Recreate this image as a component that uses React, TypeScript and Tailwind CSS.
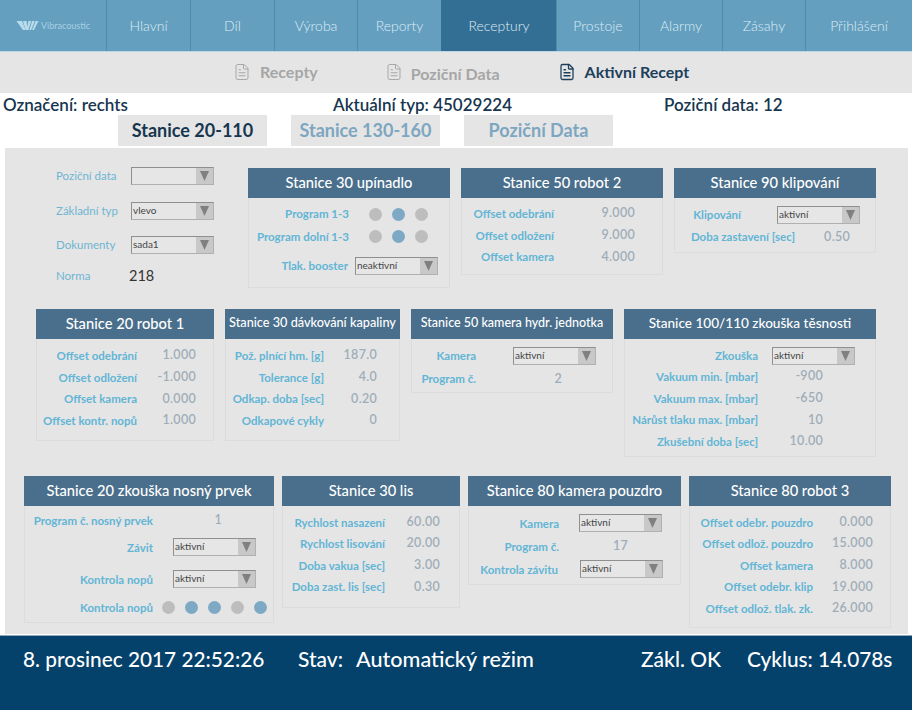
import { FileText } from "lucide-react";
import React from "react";

const navItems = [
  { label: "Hlavní", width: "w-[84px]" },
  { label: "Díl", width: "w-[84px]" },
  { label: "Výroba", width: "w-[83px]" },
  { label: "Reporty", width: "w-[84px]" },
  { label: "Receptury", width: "w-[115px]", active: true },
  { label: "Prostoje", width: "w-[83px]" },
  { label: "Alarmy", width: "w-[83px]" },
  { label: "Zásahy", width: "w-[83px]" },
  { label: "Přihlášení", width: "w-[107px]" },
];

const Logo = () => (
  <div className="w-[106px] flex items-center pl-[16px] gap-[2px] text-[#b9dcec]">
    <svg width="23" height="11" viewBox="0 0 24 12" fill="currentColor">
      <polygon points="0,1 6,1 10,11 7,11" />
      <polygon points="7,1 11,1 12,11 10,11" />
      <polygon points="13,1 16,1 13,11 11,11" />
      <polygon points="17,1 20,1 16,11 14,11" />
      <polygon points="21,1 24,1 19,11 17,11" />
    </svg>
    <span className="text-[9px] opacity-80">Vibracoustic</span>
  </div>
);

const Select = ({ value, width = "w-[83px]", className = "" }: { value?: string; width?: string; className?: string }) => (
  <div className={`${width} h-[18px] flex border border-[#8f8f8f] border-b-[#b0b0b0] border-r-[#b0b0b0] bg-[#e6e6e6] ${className}`}>
    <span className="flex-1 text-[10px] leading-[15px] text-[#444] pl-[1px]">{value}</span>
    <span className="w-[17px] bg-[#c8c8c8] flex items-center justify-center">
      <svg width="9" height="10" viewBox="0 0 9 10" fill="#808080">
        <polygon points="0,0 9,0 4.5,10" />
      </svg>
    </span>
  </div>
);

const Dots = ({ states, gap }: { states: boolean[]; gap: string }) => (
  <div className={`flex ${gap}`}>
    {states.map((on, i) => (
      <span key={i} className={`w-[13px] h-[13px] rounded-full ${on ? "bg-[#7da9c4]" : "bg-[#bdbdbd]"}`} />
    ))}
  </div>
);

const Label = ({ children, width }: { children: React.ReactNode; width: string }) => (
  <span className={`${width} shrink-0 text-right text-[11.5px] font-bold text-[#62b5d5] whitespace-nowrap`}>{children}</span>
);

const Value = ({ children, width }: { children: React.ReactNode; width: string }) => (
  <span className={`${width} shrink-0 text-right text-[12.5px] font-semibold tracking-[0.3px] text-[#9fadb8]`}>{children}</span>
);

const ValueRows = ({
  rows,
  labelWidth,
  valueWidth,
}: {
  rows: [string, string][];
  labelWidth: string;
  valueWidth: string;
}) => (
  <>
    {rows.map(([label, value]) => (
      <div key={label} className="h-[21.6px] flex items-center">
        <Label width={labelWidth}>{label}</Label>
        <Value width={valueWidth}>{value}</Value>
      </div>
    ))}
  </>
);

const Panel = ({
  title,
  width,
  body,
  titleSize = "text-[14.7px]",
  children,
}: {
  title: string;
  width: string;
  body: string;
  titleSize?: string;
  children: React.ReactNode;
}) => (
  <div className={`${width} shrink-0 border border-[#dcdcdc] border-t-0`}>
    <div className={`h-[30px] pb-[2px] -mx-px bg-[#4a6f8c] text-white font-medium ${titleSize} flex items-center justify-center whitespace-nowrap`}>
      {title}
    </div>
    <div className={body}>{children}</div>
  </div>
);

const FormRow = ({ label, children, className = "" }: { label: string; children: React.ReactNode; className?: string }) => (
  <div className={`flex items-center ${className}`}>
    <span className="w-[75px] text-[11.5px] text-[#6fb5d3]">{label}</span>
    {children}
  </div>
);

export default function App() {
  return (
    <div className="w-[912px] h-[710px] overflow-hidden bg-white flex flex-col font-['Lato','Noto_Sans',sans-serif]">
      {/* Top navigation */}
      <nav className="h-[52px] flex bg-[#659fbf] border-b border-[#bcd8e6]">
        <Logo />
        {navItems.map((item) => (
          <div
            key={item.label}
            className={`${item.width} flex items-center justify-center text-[14px] font-light border-l ${
              item.active
                ? "bg-[#336f95] border-[#336f95] text-[#dfecf4]"
                : "border-[#4f8bac] text-[#dcecf4]"
            }`}
          >
            {item.label}
          </div>
        ))}
      </nav>

      {/* Sub navigation */}
      <div className="h-[41px] pb-[1px] bg-[#e5e5e5] flex items-center pl-[233px] text-[16px] font-bold">
        <div className="flex items-center gap-[9px] text-[#a6a6a6]">
          <FileText className="w-[18px] h-[20px]" strokeWidth={1.3} />
          <span>Recepty</span>
        </div>
        <div className="flex items-center gap-[8px] ml-[67px] text-[#a6a6a6]">
          <FileText className="w-[18px] h-[20px]" strokeWidth={1.3} />
          <span className="pt-[3px]">Poziční Data</span>
        </div>
        <div className="flex items-center gap-[9px] ml-[58px] text-[#1d3f5c]">
          <FileText className="w-[18px] h-[20px]" strokeWidth={1.7} />
          <span>Aktivní Recept</span>
        </div>
      </div>

      {/* Info line */}
      <div className="h-[22px] pt-[2px] flex items-center text-[17px] font-semibold text-[#17364f] pl-[3px]">
        <span className="w-[330px]">Označení: rechts</span>
        <span className="w-[331px]">Aktuální typ: 45029224</span>
        <span>Poziční data: 12</span>
      </div>

      {/* Tabs */}
      <div className="h-[31px] flex gap-[24px] pl-[118px] text-[18px] font-bold">
        <div className="w-[149px] bg-[#e5e5e5] flex items-center justify-center text-[#17364f]">Stanice 20-110</div>
        <div className="w-[149px] bg-[#e5e5e5] flex items-center justify-center text-[#7da6c0]">Stanice 130-160</div>
        <div className="w-[149px] bg-[#e5e5e5] flex items-center justify-center text-[#7da6c0]">Poziční Data</div>
      </div>

      {/* Main area */}
      <main className="h-[486px] mt-[2px] mx-[5px] w-[903px] bg-[#e5e5e5] pt-[20px]">
        <div className="flex items-start gap-[11px]">
          <div className="w-[232px] pl-[51px] -mt-px flex flex-col">
            <FormRow className="h-[18px]" label="Poziční data">
              <Select width="w-[83px]" />
            </FormRow>
            <FormRow className="h-[18px] mt-[17px]" label="Základní typ">
              <Select width="w-[83px]" value="vlevo" />
            </FormRow>
            <FormRow className="h-[18px] mt-[16px]" label="Dokumenty">
              <Select width="w-[83px]" value="sada1" />
            </FormRow>
            <div className="flex items-center h-[18px] mt-[13px]">
              <span className="w-[73px] text-[11.5px] text-[#6fb5d3]">Norma</span>
              <span className="text-[14.5px] text-[#333]">218</span>
            </div>
          </div>

          <Panel title="Stanice 30 upínadlo" width="w-[202px]" body="pt-[5px] pb-[12px]">
            <div className="h-[22px] flex items-center">
              <Label width="w-[100px]">Program 1-3</Label>
              <span className="w-[20px]" />
              <Dots states={[false, true, false]} gap="gap-[10px]" />
            </div>
            <div className="h-[23px] flex items-center">
              <Label width="w-[100px]">Program dolní 1-3</Label>
              <span className="w-[20px]" />
              <Dots states={[false, true, false]} gap="gap-[10px]" />
            </div>
            <div className="h-[18px] mt-[9px] flex items-center">
              <Label width="w-[99px]">Tlak. booster</Label>
              <Select value="neaktivní" width="w-[83px]" className="ml-[7px]" />
            </div>
          </Panel>

          <Panel title="Stanice 50 robot 2" width="w-[202px]" body="pt-[5px] pb-[6px]">
            <ValueRows
              labelWidth="w-[92px]"
              valueWidth="w-[81px]"
              rows={[
                ["Offset odebrání", "9.000"],
                ["Offset odložení", "9.000"],
                ["Offset kamera", "4.000"],
              ]}
            />
          </Panel>

          <Panel title="Stanice 90 klipování" width="w-[202px]" body="pt-[8px] pb-[4px]">
            <div className="h-[18px] flex items-center">
              <Label width="w-[66px]">Klipování</Label>
              <Select value="aktivní" width="w-[83px]" className="ml-[36px]" />
            </div>
            <div className="h-[22px] mt-[2px] flex items-center">
              <Label width="w-[120px]">Doba zastavení [sec]</Label>
              <Value width="w-[55px]">0.50</Value>
            </div>
          </Panel>
        </div>

        <div className="flex items-start gap-[11px] mt-[21px] pl-[31px]">
          <Panel title="Stanice 20 robot 1" width="w-[178px]" body="pt-[6px] pb-[9px]">
            <ValueRows
              labelWidth="w-[100px]"
              valueWidth="w-[59px]"
              rows={[
                ["Offset odebrání", "1.000"],
                ["Offset odložení", "-1.000"],
                ["Offset kamera", "0.000"],
                ["Offset kontr. nopů", "1.000"],
              ]}
            />
          </Panel>
          <Panel title="Stanice 30 dávkování kapaliny" titleSize="text-[12.7px]" width="w-[175px]" body="pt-[6px] pb-[9px]">
            <ValueRows
              labelWidth="w-[98px]"
              valueWidth="w-[53px]"
              rows={[
                ["Pož. plnící hm. [g]", "187.0"],
                ["Tolerance [g]", "4.0"],
                ["Odkap. doba [sec]", "0.20"],
                ["Odkapové cykly", "0"],
              ]}
            />
          </Panel>
          <Panel title="Stanice 50 kamera hydr. jednotka" titleSize="text-[12.5px]" width="w-[202px]" body="pt-[8px] pb-[2px]">
            <div className="h-[18px] flex items-center">
              <Label width="w-[64px]">Kamera</Label>
              <Select value="aktivní" width="w-[83px]" className="ml-[37px]" />
            </div>
            <div className="h-[22px] mt-[3px] flex items-center">
              <Label width="w-[64px]">Program č.</Label>
              <Value width="w-[86px]">2</Value>
            </div>
          </Panel>
          <Panel title="Stanice 100/110 zkouška těsnosti" titleSize="text-[13.6px]" width="w-[252px]" body="pt-[8px] pb-[4px]">
            <div className="h-[18px] flex items-center">
              <Label width="w-[133px]">Zkouška</Label>
              <Select value="aktivní" width="w-[83px]" className="ml-[14px]" />
            </div>
            <div className="mt-[1px]">
              <ValueRows
                labelWidth="w-[133px]"
                valueWidth="w-[65px]"
                rows={[
                  ["Vakuum min. [mbar]", "-900"],
                  ["Vakuum max. [mbar]", "-650"],
                  ["Nárůst tlaku max. [mbar]", "10"],
                  ["Zkušební doba [sec]", "10.00"],
                ]}
              />
            </div>
          </Panel>
        </div>

        <div className="flex items-start gap-[8px] mt-[19px] pl-[19px]">
          <Panel title="Stanice 20 zkouška nosný prvek" width="w-[250px]" body="pt-[3px] pb-[5px]">
            <div className="h-[22px] flex items-center">
              <Label width="w-[128px]">Program č. nosný prvek</Label>
              <Value width="w-[69px]">1</Value>
            </div>
            <div className="h-[18px] mt-[7px] flex items-center">
              <Label width="w-[128px]">Závit</Label>
              <Select value="aktivní" width="w-[83px]" className="ml-[20px]" />
            </div>
            <div className="h-[18px] mt-[14px] flex items-center">
              <Label width="w-[128px]">Kontrola nopů</Label>
              <Select value="aktivní" width="w-[83px]" className="ml-[20px]" />
            </div>
            <div className="h-[20px] mt-[9px] flex items-center">
              <Label width="w-[128px]">Kontrola nopů</Label>
              <span className="w-[9px]" />
              <Dots states={[false, true, true, false, true]} gap="gap-[10px]" />
            </div>
          </Panel>
          <Panel title="Stanice 30 lis" width="w-[178px]" body="pt-[5px] pb-[9px]">
            <ValueRows
              labelWidth="w-[102px]"
              valueWidth="w-[55px]"
              rows={[
                ["Rychlost nasazení", "60.00"],
                ["Rychlost lisování", "20.00"],
                ["Doba vakua [sec]", "3.00"],
                ["Doba zast. lis [sec]", "0.30"],
              ]}
            />
          </Panel>
          <Panel title="Stanice 80 kamera pouzdro" width="w-[213px]" body="pt-[8px] pb-[6px]">
            <div className="h-[18px] flex items-center">
              <Label width="w-[90px]">Kamera</Label>
              <Select value="aktivní" width="w-[83px]" className="ml-[20px]" />
            </div>
            <div className="h-[22px] mt-[3px] flex items-center">
              <Label width="w-[90px]">Program č.</Label>
              <Value width="w-[69px]">17</Value>
            </div>
            <div className="h-[18px] mt-[3px] flex items-center">
              <Label width="w-[89px]">Kontrola závitu</Label>
              <Select value="aktivní" width="w-[83px]" className="ml-[22px]" />
            </div>
          </Panel>
          <Panel title="Stanice 80 robot 3" width="w-[202px]" body="pt-[5px] pb-[8px]">
            <ValueRows
              labelWidth="w-[123px]"
              valueWidth="w-[60px]"
              rows={[
                ["Offset odebr. pouzdro", "0.000"],
                ["Offset odlož. pouzdro", "15.000"],
                ["Offset kamera", "8.000"],
                ["Offset odebr. klip", "19.000"],
                ["Offset odlož. tlak. zk.", "26.000"],
              ]}
            />
          </Panel>
        </div>
      </main>

      {/* Footer status */}
      <footer className="flex-1 mt-[1px] bg-[#04416b] border-t border-[#8fa9bb] text-white text-[21px] font-medium">
        <div className="h-[46px] flex items-center pl-[23px] whitespace-nowrap">
          <span className="w-[275px] text-[20.8px]">8. prosinec 2017 22:52:26</span>
          <span className="w-[58px]">Stav:</span>
          <span className="w-[285px] text-[21.6px]">Automatický režim</span>
          <span className="w-[106px]">Zákl. OK</span>
          <span className="text-[20.8px]">Cyklus: 14.078s</span>
        </div>
      </footer>
    </div>
  );
}
